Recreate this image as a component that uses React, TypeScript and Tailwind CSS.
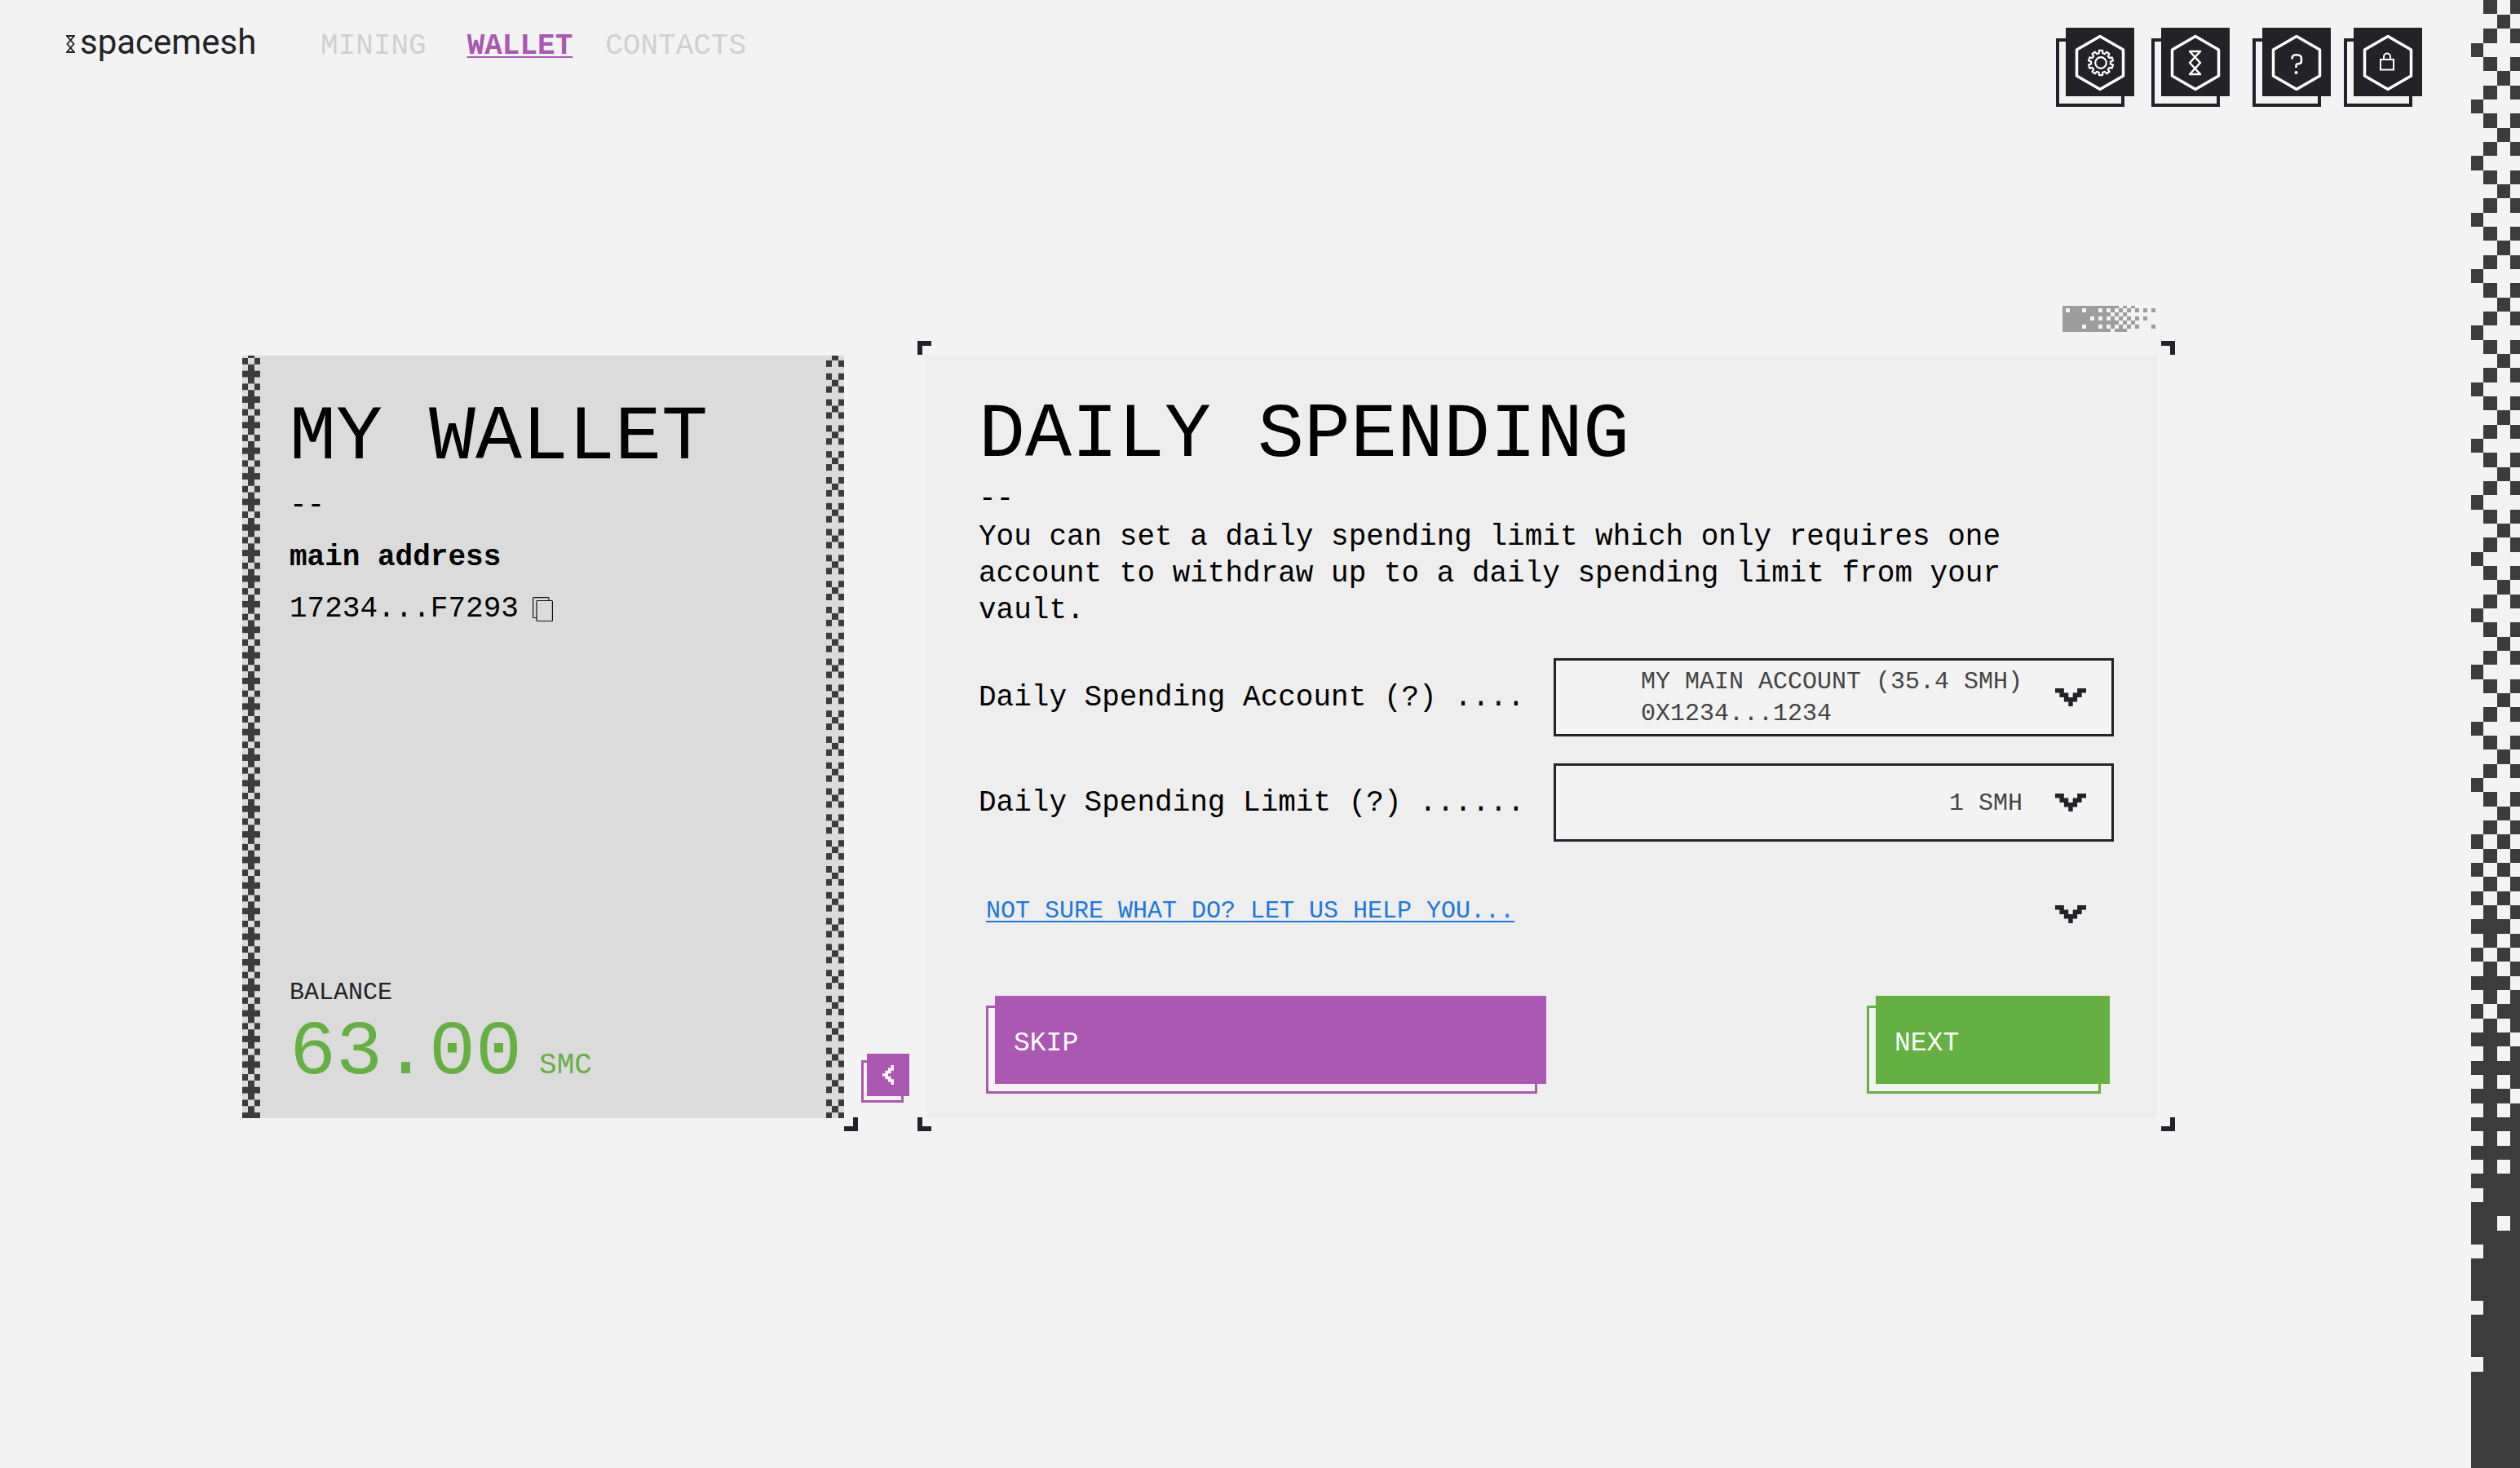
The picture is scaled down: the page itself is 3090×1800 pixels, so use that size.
import type { ReactNode } from "react";

const INK = "#222228";
const CHECK = "#3c3c3c";

/* Dark cells of each row in the page-edge checkerboard. */
const FADE_ROWS: string[] = [
  ...Array.from({ length: 59 }, (_, r) => (r % 4 === 1 ? "2" : r % 4 === 3 ? "0" : "13")),
  "02", "13", "02", "13", "02", "13", "012", "13", "02", "13", "012", "13", "023", "13", "012",
  "13", "0123", "13", "012", "13", "0123", "13", "0123", "13", "0123", "123", "0123", "013",
  "0123", "123", "0123", "0123", "0123", "123", "0123", "0123", "0123", "123",
  ...Array.from({ length: 7 }, () => "0123"),
];
const FADE_X = [0, 15, 32, 48];
const FADE_W = [15, 17, 16, 12];

function EdgeFade() {
  const pitch = 17.33;
  return (
    <svg
      className="absolute inset-0 h-full w-full"
      viewBox="0 0 60 1800"
      preserveAspectRatio="none"
      shapeRendering="crispEdges"
      aria-hidden="true"
    >
      {FADE_ROWS.map((row, r) =>
        row.split("").map((c) => (
          <rect
            key={`${r}-${c}`}
            x={FADE_X[Number(c)]}
            y={r * pitch + (r > 0 ? 0.8 : 0)}
            width={FADE_W[Number(c)]}
            height={pitch}
            fill={CHECK}
          />
        )),
      )}
    </svg>
  );
}

function Stripe({ id, period, offset, children }: { id: string; period: number; offset: number; children: ReactNode }) {
  return (
    <div className="relative w-[22px] shrink-0">
      <svg className="absolute inset-0 h-full w-full" aria-hidden="true">
        <defs>
          <pattern id={id} width="22" height={period} y={offset} patternUnits="userSpaceOnUse" viewBox="0 0 22 32" preserveAspectRatio="none">
            {children}
          </pattern>
        </defs>
        <rect width="22" height="100%" fill={`url(#${id})`} />
      </svg>
    </div>
  );
}

function Corner({ className, d }: { className: string; d: string }) {
  return (
    <svg className={`absolute h-[17px] w-[17px] ${className}`} viewBox="0 0 17 17" aria-hidden="true">
      <path d={d} fill={INK} />
    </svg>
  );
}
const TOP_LEFT = "M0 0H17V6H6V17H0Z";
const TOP_RIGHT = "M0 0H17V17H11V6H0Z";
const BOTTOM_LEFT = "M0 0H6V11H17V17H0Z";
const BOTTOM_RIGHT = "M11 0H17V17H0V11H11Z";

/* Rows of the small dithered block, first column 4px wide, the rest 5px. */
const DITHER = [
  "##############.#.#.....",
  "#.###.###.#.#.#.#.#.#.#",
  "############.#.#.......",
  "#######.#.#.#.#.#.#.#..",
  "##############.#.#.....",
  "#####.###.#.#.#.#.#...#",
  "############.###.......",
];

function Dither() {
  return (
    <svg
      className="absolute -top-[61px] right-[2px] h-[32px] w-[114px]"
      viewBox="0 0 114 32"
      shapeRendering="crispEdges"
      aria-hidden="true"
    >
      {DITHER.map((row, r) =>
        row.split("").map((c, i) =>
          c === "#" ? (
            <rect
              key={`${r}-${i}`}
              x={i === 0 ? 0 : 4 + (i - 1) * 5}
              y={r === 0 ? 0 : 3 + (r - 1) * 5}
              width={i === 0 ? 4 : 5}
              height={r === 0 ? 3 : r === 6 ? 4 : 5}
              fill="#9d9d9d"
            />
          ) : null,
        ),
      )}
    </svg>
  );
}

function Chevron() {
  return (
    <svg className="h-[22px] w-[38px] shrink-0" viewBox="0 0 7 4" preserveAspectRatio="none" aria-hidden="true">
      <path d="M0 0H2V1H3V2H4V1H5V0H7V1H6V2H5V3H4V4H3V3H2V2H1V1H0Z" fill={INK} />
    </svg>
  );
}

function gearPath() {
  const point = (radius: number, degrees: number) => {
    const a = ((degrees - 90) * Math.PI) / 180;
    return `${(43 + radius * Math.cos(a)).toFixed(2)} ${(43 + radius * Math.sin(a)).toFixed(2)}`;
  };
  const points: string[] = [];
  for (let i = 0; i < 10; i++) {
    const a = i * 36;
    points.push(point(12, a - 11), point(15.2, a - 8), point(15.2, a + 8), point(12, a + 11));
  }
  return `M${points.join("L")}Z`;
}

function HexButton({ label, className, children }: { label: string; className: string; children: ReactNode }) {
  return (
    <button type="button" aria-label={label} className={`relative h-[97px] w-[96px] ${className}`}>
      <span className="absolute bottom-0 left-0 h-[84px] w-[84px] border-4 border-[#222228]" />
      <span className="absolute top-0 right-0 h-[84px] w-[84px] bg-[#222228]">
        <svg viewBox="0 0 84 84" className="h-full w-full" fill="none" stroke="#fff" strokeLinejoin="round" aria-hidden="true">
          <path d="M42 10.500L70.500 27V59L42 75.500L13.500 59V27Z" strokeWidth="3.500" />
          {children}
        </svg>
      </span>
    </button>
  );
}

function Dropdown({ id, options, children }: { id: string; options: string[]; children: ReactNode }) {
  return (
    <div className="relative flex h-[96px] w-[687px] items-center justify-end gap-[40px] border-[3px] border-[#222228] bg-[#f3f3f3] pr-[31px]">
      <div className="pt-[2px] text-[30px] leading-[39px] text-[#444444]" aria-hidden="true">
        {children}
      </div>
      <Chevron />
      <select id={id} className="absolute inset-0 h-full w-full cursor-pointer opacity-0">
        {options.map((o) => (
          <option key={o}>{o}</option>
        ))}
      </select>
    </div>
  );
}

function ActionButton({ label, width, face, outline }: { label: string; width: string; face: string; outline: string }) {
  return (
    <button type="button" className={`relative h-[120px] ${width}`}>
      <span className={`absolute bottom-0 left-0 right-[11px] h-[108px] border-[3px] bg-[#f3f3f3] ${outline}`} />
      <span
        className={`absolute top-0 right-0 left-[11px] flex h-[108px] items-center pt-[10px] pl-[23px] text-[33px] leading-[40px] text-white ${face}`}
      >
        {label}
      </span>
    </button>
  );
}

export default function App() {
  return (
    <div className="flex min-h-screen bg-[#f3f3f3] font-['Liberation_Mono',monospace] text-black">
      <div className="flex min-w-0 flex-1 flex-col">
        <header className="flex items-start pt-[34px] pr-[60px] pl-[81px]">
          <a href="#home" className="flex w-[312px] shrink-0 gap-[6px] text-[#222228]">
            <svg className="mt-[9px] h-[22px] w-[11px]" viewBox="0 0 11 22" fill="none" stroke={INK} strokeWidth="1.800" aria-hidden="true">
              <path d="M1 1H10L1.500 11L10 21H1L9.500 11Z" />
            </svg>
            <span className="font-[Roboto,sans-serif] text-[42px] leading-[36px]">spacemesh</span>
          </a>
          <nav className="flex text-[36px] leading-[46px] text-[#d0d0d0]">
            <a href="#mining">MINING</a>
            <a
              href="#wallet"
              aria-current="page"
              className="mr-[40px] ml-[50px] font-bold text-[#aa58b1] underline decoration-[2px] underline-offset-[3px]"
            >
              WALLET
            </a>
            <a href="#contacts">CONTACTS</a>
          </nav>
          <div className="ml-auto flex">
            <HexButton label="Settings" className="mr-[21px]">
              <path d={gearPath()} strokeWidth="2.200" />
              <circle cx="43" cy="43" r="6.800" strokeWidth="2.200" />
            </HexButton>
            <HexButton label="Network" className="mr-[28px]">
              <path d="M35 29H48L35 43L48 57H35L48 43Z" strokeWidth="2.500" />
            </HexButton>
            <HexButton label="Help" className="mr-[16px]">
              <path
                d="M36.500 38.500C36.500 35 38.500 33.300 41 33.300H42.500C46 33.300 48 35.200 48 38V40.500C48 43 46.500 44.200 44 44.200C42 44.200 41.500 45 41.500 46.500V49"
                strokeWidth="2.600"
              />
              <circle cx="41.500" cy="55" r="2.100" fill="#fff" stroke="none" />
            </HexButton>
            <HexButton label="Lock" className="">
              <path d="M33 39H49V51.500H33ZM37 39V35.500A4 4 0 0 1 45 35.500V39" strokeWidth="2" strokeLinejoin="miter" />
            </HexButton>
          </div>
        </header>

        <main className="mt-[305px] mr-[385px] mb-[100px] ml-[297px] flex">
          <section className="relative flex w-[738px] shrink-0 bg-[#dbdbdb]">
            <Stripe id="weave" period={31.36} offset={3}>
              <path fill={CHECK} d="M0 0H7V8H15V0H22V8H15V16H22V24H15V32H7V24H0V16H7V8H0Z" />
            </Stripe>
            <div className="flex flex-1 flex-col pt-[53px] pb-[32px] pl-[36px]">
              <h1 className="text-[95px] leading-[96px]">MY WALLET</h1>
              <div className="mt-[12px] text-[36px] leading-[45px]">--</div>
              <div className="mt-[19px] text-[36px] leading-[45px] font-bold">main address</div>
              <div className="mt-[18px] flex items-center gap-[17px] text-[36px] leading-[45px]">
                <span>17234...F7293</span>
                <button type="button" aria-label="Copy address">
                  <svg className="h-[30px] w-[25px]" viewBox="0 0 25 30" fill="none" stroke="#111" strokeWidth="1.200" aria-hidden="true">
                    <rect x="5" y="4.500" width="19.400" height="25" rx="1" />
                    <path d="M5 25.500H1.600Q0.600 25.500 0.600 24.500V1.600Q0.600 0.600 1.600 0.600H19Q20 0.600 20 1.600V4.500" />
                  </svg>
                </button>
              </div>
              <div className="mt-auto text-[30px] leading-[40px] text-[#222228]">BALANCE</div>
              <div className="mt-[6px] flex items-baseline gap-[21px] text-[#64b042]">
                <span className="text-[95px] leading-[96px]">63.00</span>
                <span className="text-[36px]">SMC</span>
              </div>
            </div>
            <Stripe id="crosses" period={31.8} offset={-10}>
              <path fill={CHECK} d="M0 0H7V8H0ZM15 0H22V8H15ZM7 8H15V16H7ZM0 16H7V24H0ZM15 16H22V24H15Z" />
            </Stripe>
            <Corner className="-right-[17px] -bottom-[16px]" d={BOTTOM_RIGHT} />
          </section>

          <div className="flex w-[101px] shrink-0 items-end pb-[19px] pl-[21px]">
            <button type="button" aria-label="Collapse wallet" className="relative h-[60px] w-[59px]">
              <span className="absolute bottom-0 left-0 h-[52px] w-[52px] border-[3px] border-[#aa58b1]" />
              <span className="absolute top-0 right-0 flex h-[52px] w-[52px] items-center justify-center bg-[#aa58b1]">
                <svg className="h-[24px] w-[14px]" viewBox="0 0 4 7" preserveAspectRatio="none" aria-hidden="true">
                  <path d="M4 0V2H3V3H2V4H3V5H4V7H3V6H2V5H1V4H0V3H1V2H2V1H3V0Z" fill="#fff" />
                </svg>
              </span>
            </button>
          </div>

          <section className="relative min-w-0 flex-1 bg-[#eeeeee] pt-[50px] pr-[53px] pb-[30px] pl-[64px]">
            <Dither />
            <Corner className="-top-[18px] -left-[11px]" d={TOP_LEFT} />
            <Corner className="-top-[18px] -right-[22px]" d={TOP_RIGHT} />
            <Corner className="-bottom-[16px] -left-[11px]" d={BOTTOM_LEFT} />
            <Corner className="-right-[22px] -bottom-[16px]" d={BOTTOM_RIGHT} />

            <h2 className="text-[95px] leading-[96px]">DAILY SPENDING</h2>
            <div className="mt-[7px] text-[36px] leading-[45px]">--</div>
            <p className="mt-[2px] max-w-[1280px] text-[36px] leading-[45px]">
              You can set a daily spending limit which only requires one account to withdraw up to a daily spending
              limit from your vault.
            </p>

            <div className="mt-[36px] flex flex-col gap-[33px] text-[36px] leading-[45px]">
              <div className="flex items-center justify-between">
                <label htmlFor="spending-account" className="whitespace-nowrap">
                  Daily Spending Account (?) ....
                </label>
                <Dropdown id="spending-account" options={["MY MAIN ACCOUNT (35.4 SMH) 0X1234...1234"]}>
                  <div>MY MAIN ACCOUNT (35.4 SMH)</div>
                  <div>0X1234...1234</div>
                </Dropdown>
              </div>
              <div className="flex items-center justify-between">
                <label htmlFor="spending-limit" className="whitespace-nowrap">
                  Daily Spending Limit (?) ......
                </label>
                <Dropdown id="spending-limit" options={["1 SMH"]}>
                  1 SMH
                </Dropdown>
              </div>
            </div>

            <div className="mt-[70px] flex items-end justify-between pr-[34px] pl-[9px]">
              <a href="#help" className="text-[30px] leading-[30px] text-[#1a76e0] underline decoration-[2px] underline-offset-[4px]">
                NOT SURE WHAT DO? LET US HELP YOU...
              </a>
              <button type="button" aria-label="Show help">
                <Chevron />
              </button>
            </div>

            <div className="mt-[89px] flex justify-between pr-[5px] pl-[9px]">
              <ActionButton label="SKIP" width="w-[687px]" face="bg-[#aa58b1]" outline="border-[#aa58b1]" />
              <ActionButton label="NEXT" width="w-[298px]" face="bg-[#64b042]" outline="border-[#64b042]" />
            </div>
          </section>
        </main>
      </div>

      <div className="relative w-[60px] shrink-0">
        <EdgeFade />
      </div>
    </div>
  );
}
